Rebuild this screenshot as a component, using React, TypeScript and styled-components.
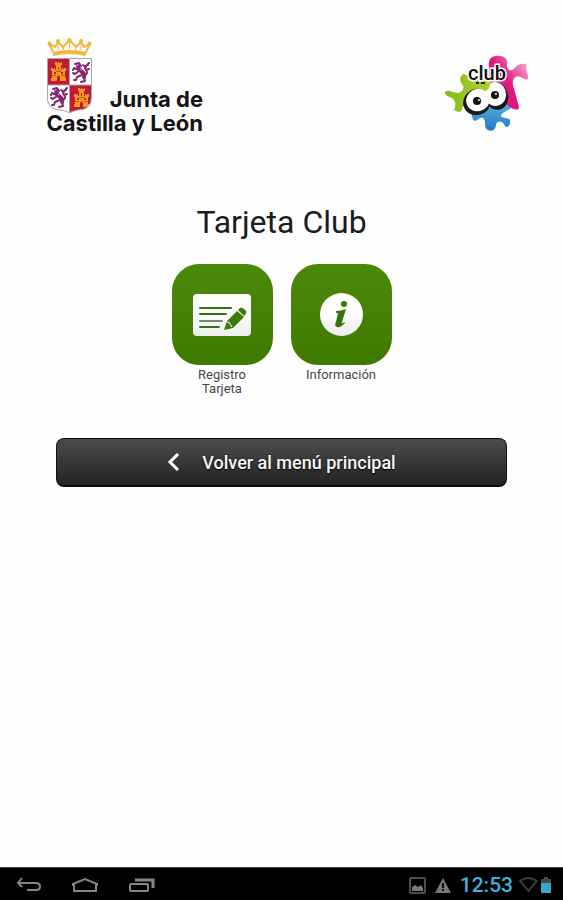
import React from "react";
import styled, { createGlobalStyle } from "styled-components";

const GlobalStyle = createGlobalStyle`
  *, *::before, *::after { box-sizing: border-box; }
  body { margin: 0; background: #fff; font-family: Roboto, "Liberation Sans", sans-serif; }
`;

const Screen = styled.div`
  min-height: 100vh;
  display: flex;
  flex-direction: column;
  background: #fefefe;
`;

const Header = styled.header`
  display: flex;
  justify-content: space-between;
  align-items: flex-start;
  padding: 36px 32px 0;
`;

const JuntaSvg = styled.svg`
  display: block;
  width: 172px;
  height: 104px;
`;

const ClubSvg = styled.svg`
  display: block;
  width: 88px;
  height: 84px;
  margin-top: 14px;
`;

const Main = styled.main`
  flex: 1;
  display: flex;
  flex-direction: column;
  align-items: center;
  padding: 64px 56px 40px;
`;

const Title = styled.h1`
  margin: 0;
  font-size: 32px;
  line-height: 36px;
  font-weight: 400;
  color: #1c1c1c;
`;

const Tiles = styled.nav`
  display: flex;
  gap: 18px;
  margin-top: 24px;
`;

const Tile = styled.a`
  width: 101px;
  display: flex;
  flex-direction: column;
  align-items: center;
  color: #484848;
  text-decoration: none;
`;

const TileFace = styled.span`
  width: 101px;
  height: 101px;
  display: grid;
  place-items: center;
  border-radius: 27px;
  background: linear-gradient(#4b890a, #3f7a00);
`;

const TileLabel = styled.span`
  width: 80px;
  margin-top: 3px;
  font-size: 13px;
  line-height: 14px;
  text-align: center;
`;

const BackButton = styled.button`
  width: 100%;
  height: 49px;
  margin-top: 42px;
  padding: 0;
  display: flex;
  align-items: center;
  justify-content: center;
  gap: 22px;
  border: 1px solid #111;
  border-bottom: 2px solid #0c0c0c;
  border-radius: 8px;
  background: linear-gradient(#4b4b4b, #242424);
  color: #f6f6f6;
  font-family: inherit;
  font-size: 18px;
  font-weight: 500;
  text-shadow: 0 1px 2px #000;
`;

const SystemBar = styled.footer`
  height: 33px;
  display: flex;
  align-items: center;
  justify-content: space-between;
  padding: 2px 10px 0 16px;
  background: #000;
  border-top: 1px solid #4a4a4a;
`;

const NavKeys = styled.div`
  display: flex;
  gap: 29px;
`;

const NavKey = styled.button`
  padding: 0;
  border: 0;
  background: none;
  display: flex;
`;

const Status = styled.div`
  display: flex;
  align-items: center;
`;

const StatusIcon = styled.svg<{ $gap: number }>`
  display: block;
  margin-right: ${(p) => p.$gap}px;
`;

const Clock = styled.time`
  margin-right: 6px;
  font-size: 21px;
  line-height: 28px;
  font-weight: 500;
  color: #3eb1dc;
`;

const Castle = ({ x, y }: { x: number; y: number }) => (
  <g transform={`translate(${x} ${y})`}>
    <path
      fill="#f39a1d"
      d="M1 19V16H2V9H1V6H3V7H4V6H5V8H6V3H5V0H7V1H8V0H9V1H11V0H12V3H11V8H12V6H13V7H14V6H16V9H15V16H16V19Z"
    />
    <path fill="#b5202c" d="M7 19V15Q8 12 10 15V19ZM8 5H9V8H8ZM4 10H6V12H4ZM11 10H13V12H11Z" />
    <path stroke="#bd5b1b" d="M2 13.500H6M11 13.500H15M6 9.500H11" />
  </g>
);

const Lion = ({ x, y }: { x: number; y: number }) => (
  <g transform={`translate(${x} ${y})`} fill="none" stroke="#84266f" strokeLinecap="round" strokeLinejoin="round">
    <path strokeWidth="4" d="M6 4Q7 8 10 10T12 15" />
    <path strokeWidth="2" d="M3 2L7 1L9 4M7 8L2 6L1 8M7 9L3 12L1 11M10 13L5 15L4 18L2 18M12 15L13 19L9 20" />
    <path strokeWidth="2" d="M12 13Q17 12 14 8T16 3M14 5L11 3M14 8L17 7M15 3L17 1" />
    <path stroke="#e7c9df" d="M5 3H6M8 7L9 8" />
  </g>
);

const JuntaLogo = () => (
  <JuntaSvg viewBox="32 36 172 104" role="img" aria-label="Junta de Castilla y León">
    <g fill="none" stroke="#f0b83c" strokeWidth="2" strokeLinejoin="round">
      <path d="M53 52L49 44L55 47L58 42L63 47L69.500 40L76 47L81 42L84 47L90 44L86 52" />
      <path strokeWidth="4" d="M53 54Q69.500 50 86 54" />
      <path strokeWidth="1" d="M58 50V43M63.500 50V46M69.500 49V42M75.500 50V46M81 50V43" />
    </g>
    <g fill="#f0b83c">
      <circle cx="49.500" cy="43.500" r="2" />
      <circle cx="58" cy="41" r="2" />
      <circle cx="69.500" cy="40" r="2" />
      <circle cx="81" cy="41" r="2" />
      <circle cx="89.500" cy="43.500" r="2" />
    </g>
    <clipPath id="shield">
      <path d="M48 59H91V98Q91 107 83 109Q74 110 69.500 113Q65 110 56 109Q48 107 48 98Z" />
    </clipPath>
    <g clipPath="url(#shield)">
      <path fill="#fff" d="M48 59H91V113H48Z" />
      <path fill="#c31839" d="M48 59H69V85H48ZM70 85H91V114H70Z" />
      <Castle x={50} y={62} />
      <Lion x={72} y={62} />
      <Lion x={50} y={87} />
      <Castle x={73} y={88} />
    </g>
    <path
      fill="none"
      stroke="#aaa6a8"
      d="M47.500 58.500H91.500V98Q91.500 107 83 109.500Q74 110 69.500 113Q65 110 56 109.500Q47.500 107 47.500 98ZM69.500 59V112M48 85H91"
    />
    <g fontFamily='Inter, "Open Sans", sans-serif' fontWeight="700" fill="#171214">
      <text x="203" y="107" fontSize="22" textAnchor="end">
        Junta de
      </text>
      <text x="203" y="131" fontSize="22" textAnchor="end">
        Castilla y León
      </text>
    </g>
  </JuntaSvg>
);

const ClubLogo = () => (
  <ClubSvg viewBox="444 50 88 84" role="img" aria-label="Club 60">
    <defs>
      <linearGradient id="pink" x1="0" y1="1" x2="1" y2="0">
        <stop offset="0.500" stopColor="#e3167f" />
        <stop offset="1" stopColor="#f9c6dd" />
      </linearGradient>
      <linearGradient id="lime">
        <stop offset="0" stopColor="#82b91e" />
        <stop offset="1" stopColor="#b3d630" />
      </linearGradient>
      <linearGradient id="blue" x2="0" y2="1">
        <stop offset="0" stopColor="#54b0e6" />
        <stop offset="1" stopColor="#2478bd" />
      </linearGradient>
    </defs>
    <path
      fill="url(#pink)"
      d="M490 69C489 61 491 56 497 56C504 55 509 58 508 64C507 69 511 72 515 69C519 63 525 63 528 65C526 68 528 71 529 76C530 81 526 80 522 77C516 75 513 79 514 85L520 107C520 111 515 110 508 106L491 92Z"
    />
    <path
      fill="url(#lime)"
      d="M464 74L475 77L492 82L480 109L468 107C464 105 463 107 463 110C462 113 458 112 455 110C457 105 457 101 453 98C449 96 446 96 446 92C449 89 455 93 459 93C464 92 466 87 463 84C460 81 461 76 464 74Z"
    />
    <path
      fill="url(#blue)"
      d="M472 113L506 103L512 108C508 111 502 113 502 116C504 119 509 117 511 120C512 124 509 129 506 126C504 121 499 120 497 124C497 129 494 132 489 130C484 128 488 121 484 118C480 116 478 123 474 120Z"
    />
    <g fill="#191919">
      <ellipse cx="478" cy="102" rx="14" ry="13" transform="rotate(-25 478 102)" />
      <ellipse cx="497" cy="96" rx="12" ry="14" transform="rotate(-20 497 96)" />
    </g>
    <g fill="#fff">
      <ellipse cx="479" cy="100" rx="12" ry="11" transform="rotate(-25 479 100)" />
      <ellipse cx="496" cy="94" rx="11" ry="12" transform="rotate(-20 496 94)" />
    </g>
    <path fill="#a6cd2c" d="M478 86L492 83Q489 91 486 91Z" />
    <circle cx="478" cy="101" r="4" fill="#111" />
    <circle cx="496" cy="95" r="4" fill="#111" />
    <circle cx="480" cy="100" r="1" fill="#fff" />
    <circle cx="497" cy="94" r="1" fill="#fff" />
    <path stroke="#222" strokeWidth="2" d="M477 83H480M482 83H486" />
    <text
      x="488"
      y="80"
      textAnchor="middle"
      fontFamily='Roboto, "Liberation Sans", sans-serif'
      fontSize="20"
      fontWeight="500"
      fill="#111"
      stroke="#fff"
      strokeWidth="3"
      paintOrder="stroke"
    >
      club
    </text>
  </ClubSvg>
);

const FormIcon = () => (
  <svg width="58" height="42" viewBox="0 0 58 42" aria-hidden="true">
    <defs>
      <linearGradient id="card" x2="0" y2="1">
        <stop offset="0.400" stopColor="#fff" />
        <stop offset="1" stopColor="#ececec" />
      </linearGradient>
    </defs>
    <rect width="58" height="42" rx="4" fill="url(#card)" />
    <path stroke="#2f7413" strokeWidth="2" strokeLinecap="round" d="M7 14H38M7 20H33M7 33H26" />
    <path stroke="#71866a" strokeWidth="2" strokeLinecap="round" d="M7 27H29" />
    <path
      fill="#3d7c0c"
      d="M31 36L34 27L44 17L51 23L40 34ZM45 16L47 14Q49 13 51 15L53 17Q54 19 52 21L51 22Z"
    />
    <path stroke="#fff" d="M34 28Q37 28 37 30L39 33" fill="none" />
  </svg>
);

const InfoIcon = () => (
  <svg width="43" height="43" viewBox="0 0 43 43" aria-hidden="true">
    <circle cx="21.500" cy="21.500" r="21.500" fill="url(#card)" />
    <circle cx="24" cy="11" r="3" fill="#33760b" />
    <path
      fill="#33760b"
      d="M16 18Q21 18 26 16L22 29Q21 32 24 29L25 30Q21 35 17 34Q14 33 16 29L18 20L16 20Z"
    />
  </svg>
);

export default function App() {
  return (
    <Screen>
      <GlobalStyle />
      <Header>
        <JuntaLogo />
        <ClubLogo />
      </Header>
      <Main>
        <Title>Tarjeta Club</Title>
        <Tiles>
          <Tile href="#registro">
            <TileFace>
              <FormIcon />
            </TileFace>
            <TileLabel>Registro Tarjeta</TileLabel>
          </Tile>
          <Tile href="#informacion">
            <TileFace>
              <InfoIcon />
            </TileFace>
            <TileLabel>Información</TileLabel>
          </Tile>
        </Tiles>
        <BackButton type="button">
          <svg width="13" height="20" viewBox="0 0 13 20" aria-hidden="true">
            <path d="M11 2L3 10L11 18" fill="none" stroke="#fff" strokeWidth="3" />
          </svg>
          Volver al menú principal
        </BackButton>
      </Main>
      <SystemBar>
        <NavKeys>
          <NavKey type="button" aria-label="Atrás">
            <svg width="27" height="16" viewBox="0 0 27 16" fill="none" stroke="#858585" strokeWidth="2">
              <path d="M6 1L2 6L6 10M2 6H20Q24 6 24 9.500T20 13H11" />
            </svg>
          </NavKey>
          <NavKey type="button" aria-label="Inicio">
            <svg width="27" height="16" viewBox="0 0 27 16" fill="none" stroke="#858585" strokeWidth="2">
              <path d="M1 7L13 2L25 7V8H24V14H2V8H1Z" />
            </svg>
          </NavKey>
          <NavKey type="button" aria-label="Recientes">
            <svg width="27" height="16" viewBox="0 0 27 16" fill="none" stroke="#858585" strokeWidth="2">
              <rect x="2" y="7" width="18" height="7" rx="1" />
              <path d="M7 3H25V11" strokeWidth="3" />
            </svg>
          </NavKey>
        </NavKeys>
        <Status>
          <StatusIcon $gap={9} width="17" height="17" viewBox="0 0 17 17" aria-hidden="true">
            <rect x="1" y="1" width="15" height="15" rx="1" fill="none" stroke="#4d4d4d" strokeWidth="2" />
            <path fill="#777" d="M3 14V10L6 8L9 10L12 8L14 11V14Z" />
          </StatusIcon>
          <StatusIcon $gap={9} width="16" height="15" viewBox="0 0 16 15" aria-hidden="true">
            <path fill="#777" d="M8 0L16 15H0Z" />
            <path stroke="#111" strokeWidth="2" d="M8 5V10M8 11V13" />
          </StatusIcon>
          <Clock>12:53</Clock>
          <StatusIcon $gap={3} width="19" height="16" viewBox="0 0 19 16" aria-hidden="true">
            <path fill="none" stroke="#3c3c3c" strokeWidth="2" d="M1 4Q9 -2 18 4L9.500 14Z" />
          </StatusIcon>
          <StatusIcon $gap={2} width="10" height="16" viewBox="0 0 10 16" aria-hidden="true">
            <path fill="#4b4b4b" d="M3 0H7V2H10V7H0V2H3Z" />
            <path fill="#3aa5cf" d="M0 6H10V16H0Z" />
          </StatusIcon>
        </Status>
      </SystemBar>
    </Screen>
  );
}
